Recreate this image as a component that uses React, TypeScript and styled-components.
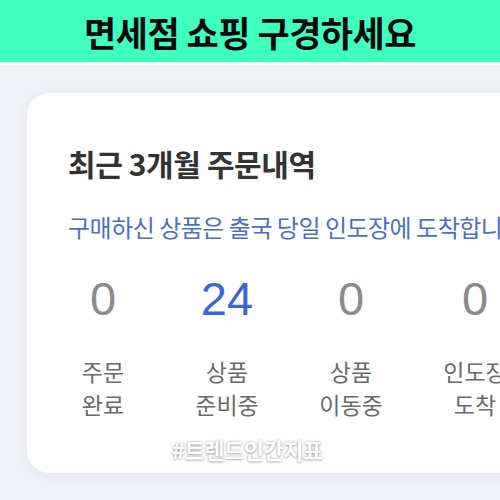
import React from 'react';
import styled, { createGlobalStyle } from 'styled-components';

const GlobalStyle = createGlobalStyle`
    html, body {
        margin: 0;
        padding: 0;
        width: 500px;
        height: 500px;
        overflow: hidden;
        background: #eff2f8;
        font-family: "Noto Sans CJK KR", "Noto Sans", sans-serif;
    }
`

const Banner = styled.div`
    height: 62px;
    display: flex;
    align-items: center;
    justify-content: center;
    background: #3effbe;
    border-bottom: 3px solid #ffffff;
    & > h1 {
        margin: 0;
        font-size: 35px;
        font-weight: 700;
        color: #0a0a0a;
        letter-spacing: -0.5px;
    }
`

const Page = styled.div`
    padding: 28px 0 0 27px;
`

const Card = styled.div`
    position: relative;
    width: 520px;
    height: 380px;
    box-sizing: border-box;
    padding: 50px 0 0 41px;
    background: #ffffff;
    border-radius: 22px 0 0 22px;
    box-shadow: 0 2px 14px rgba(170, 185, 210, 0.18);
`

const Title = styled.h2`
    margin: 0;
    font-size: 30px;
    line-height: 40px;
    font-weight: 700;
    color: #333333;
    letter-spacing: -0.4px;
`

const Notice = styled.p`
    margin: 28px 0 0;
    font-size: 24px;
    line-height: 32px;
    color: #4d6fc2;
    white-space: nowrap;
    letter-spacing: -0.5px;
`

const Stats = styled.div`
    display: grid;
    grid-template-columns: repeat(4, 124px);
    margin: 26px 0 0 -27px;
`

const Stat = styled.div`
    display: flex;
    flex-direction: column;
    align-items: center;
`

const Count = styled.span<{ $active?: boolean }>`
    font-family: "Liberation Sans", "Noto Sans", sans-serif;
    font-size: 47px;
    line-height: 60px;
    color: ${(p) => (p.$active ? '#3a67d8' : '#8a8a8a')};
`

const Label = styled.span`
    margin-top: 26px;
    font-size: 23px;
    line-height: 33px;
    color: #6a6a6a;
    text-align: center;
    white-space: nowrap;
`

const Watermark = styled.div`
    position: absolute;
    left: 145px;
    top: 340px;
    font-size: 22px;
    font-weight: 700;
    color: #ffffff;
    letter-spacing: -0.5px;
    text-shadow: 0 0 3px rgba(0, 0, 0, 0.35), 0 1px 2px rgba(0, 0, 0, 0.2);
`

const stats = [
    { count: 0, label: ['주문', '완료'] },
    { count: 24, label: ['상품', '준비중'], active: true },
    { count: 0, label: ['상품', '이동중'] },
    { count: 0, label: ['인도장', '도착'] },
]

const App: React.FC = () => {
    return (
        <>
            <GlobalStyle />
            <Banner>
                <h1>면세점 쇼핑 구경하세요</h1>
            </Banner>
            <Page>
                <Card>
                    <Title>최근 3개월 주문내역</Title>
                    <Notice>구매하신 상품은 출국 당일 인도장에 도착합니다.</Notice>
                    <Stats>
                        {stats.map((s, i) => (
                            <Stat key={i}>
                                <Count $active={s.active}>{s.count}</Count>
                                <Label>
                                    {s.label[0]}
                                    <br />
                                    {s.label[1]}
                                </Label>
                            </Stat>
                        ))}
                    </Stats>
                    <Watermark>#트렌드인간지표</Watermark>
                </Card>
            </Page>
        </>
    )
}

export default App;
